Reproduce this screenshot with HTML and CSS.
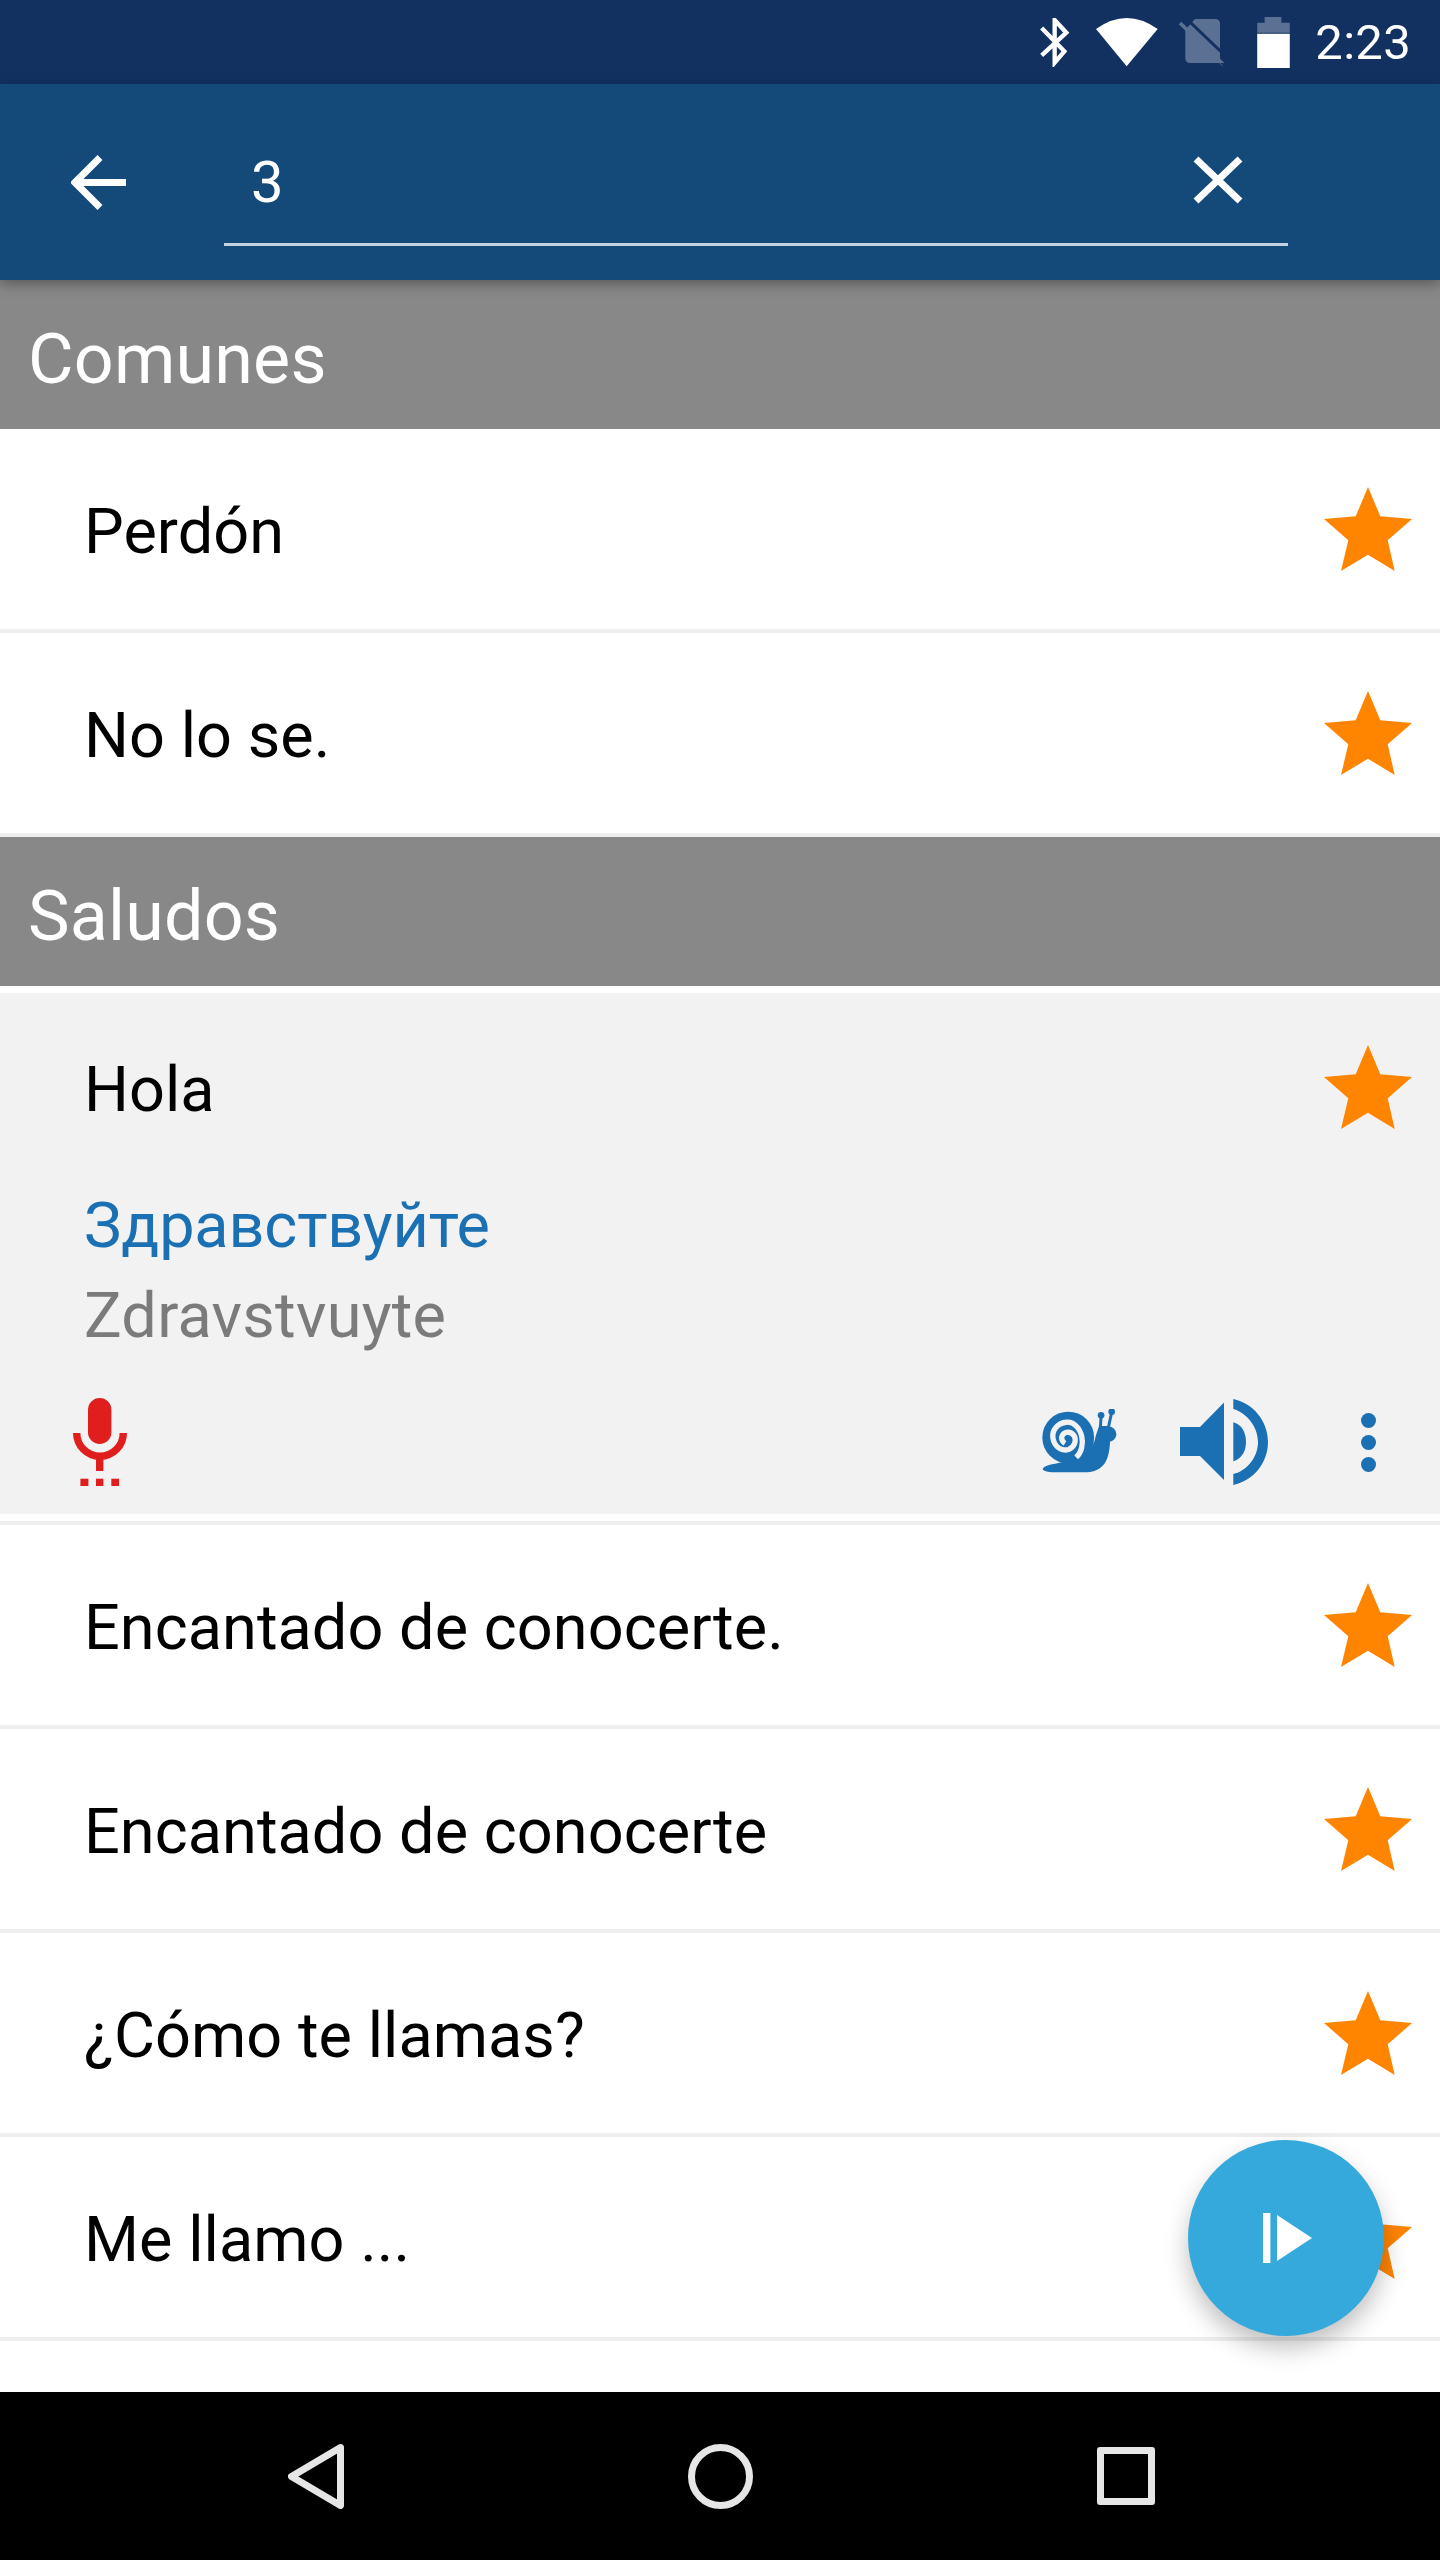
FILE: index.html
```html
<!DOCTYPE html>
<html lang="es">
<head>
    <meta charset="UTF-8">
    <meta name="viewport" content="width=device-width, initial-scale=1.0">
    <title>Frases</title>
    <link rel="stylesheet" href="styles.css">
</head>
<body>
    <svg class="defs" width="0" height="0">
        <symbol id="star" viewBox="0 0 88 84">
            <polygon points="44,0 56.3,29.3 88,32 63.7,53.3 70.7,84 44,67.7 17,84 24.3,53.3 0,32 31.7,29.3"/>
        </symbol>
    </svg>

    <div class="app">
        <div class="status-bar">
            <svg class="ic-bluetooth" viewBox="0 0 93 147"><path d="M8 30L76 100L47 134V6L82 44L8 112" fill="none" stroke="#fff" stroke-width="13"/></svg>
            <svg class="ic-wifi" viewBox="0 0 186 147"><path d="M0 33Q92 -33 185 33L92 145Z" fill="#fff"/></svg>
            <svg class="ic-sim" viewBox="0 0 138 144">
                <path d="M48 3H108Q123 3 123 18V135H34Q19 135 19 120V35Z" fill="#5b7193"/>
                <path d="M14 -6L146 120" stroke="#123160" stroke-width="9"/>
                <path d="M3 15L135 141" stroke="#5b7193" stroke-width="11"/>
                <path d="M123 135L138 149V135Z" fill="#123160"/>
            </svg>
            <svg class="ic-battery" viewBox="0 0 97 152">
                <path d="M22 0H72V17H97V47H0V17H22Z" fill="#5b7193"/>
                <rect x="0" y="50" width="97" height="102" fill="#fff"/>
            </svg>
            <span class="clock">2:23</span>
        </div>

        <div class="toolbar">
            <svg class="ic-back" viewBox="0 0 55 55"><path d="M55 27.5H5M29 2.5L4 27.5L29 52.5" fill="none" stroke="#fff" stroke-width="7"/></svg>
            <div class="search">
                <span class="search-text">3</span>
                <svg class="ic-clear" viewBox="0 0 50 48"><path d="M3 3L47 45M47 3L3 45" fill="none" stroke="#fff" stroke-width="7"/></svg>
            </div>
        </div>

        <div class="content">
            <div class="section-title">Comunes</div>
            <div class="row">
                <span class="phrase">Perdón</span>
                <svg class="star"><use href="#star"/></svg>
            </div>
            <div class="row">
                <span class="phrase">No lo se.</span>
                <svg class="star"><use href="#star"/></svg>
            </div>

            <div class="section-title">Saludos</div>
            <div class="open-item">
                <div class="open-body">
                    <div class="open-head">
                        <span class="phrase">Hola</span>
                        <svg class="star"><use href="#star"/></svg>
                    </div>
                    <div class="translation">Здравствуйте</div>
                    <div class="transliteration">Zdravstvuyte</div>
                    <div class="actions">
                        <svg class="ic-mic" viewBox="0 0 54 88">
                            <rect x="15" y="0" width="23.4" height="46" rx="11.7"/>
                            <path d="M3.7 35a23.3 23.3 0 0 0 46.6 0" fill="none" stroke="#e01e1e" stroke-width="7.4"/>
                            <rect x="23" y="58" width="7.4" height="15"/>
                            <rect x="7.4" y="80.7" width="8" height="7.3"/>
                            <rect x="23" y="80.7" width="7.4" height="7.3"/>
                            <rect x="38.3" y="80.7" width="7.8" height="7.3"/>
                        </svg>
                        <svg class="ic-snail" viewBox="20 25 235 197">
                            <circle cx="102" cy="110" r="78"/>
                            <path d="M28 200C40 192 60 190 75 186L140 170C165 155 180 135 185 105L195 75H225L228 122C226 170 215 215 150 215H60C40 215 25 210 25 205Z"/>
                            <circle cx="224" cy="100" r="23"/>
                            <path d="M199 80L201 45M223 80L233 34" fill="none" stroke="#1b70b3" stroke-width="9"/>
                            <circle cx="201" cy="43" r="10"/>
                            <circle cx="233" cy="32" r="10"/>
                            <path d="M126 170C142 155 148 130 143 108C137 80 118 62 97 64C70 66 52 88 56 112C60 138 82 152 103 146C120 140 128 120 120 105C112 92 95 90 85 102C80 110 82 122 92 128" fill="none" stroke="#f2f2f2" stroke-width="16"/>
                        </svg>
                        <svg class="ic-speaker" viewBox="0 0 88 86">
                            <path d="M0 28H20L44 3.5V81L20 57H0Z"/>
                            <path d="M53.3 23.3C61 25 66 33 66 43C66 53 61 60 53.3 62.3Z"/>
                            <path d="M53.3 0C73 4 88 22 88 43C88 64 73 82 53.3 86V75C67 72 78 58 78 43C78 28 67 14 53.3 10Z"/>
                        </svg>
                        <svg class="ic-more" viewBox="0 0 15 59">
                            <circle cx="7.5" cy="7.5" r="7.5"/>
                            <circle cx="7.5" cy="29.5" r="7.5"/>
                            <circle cx="7.5" cy="51.5" r="7.5"/>
                        </svg>
                    </div>
                </div>
            </div>
            <div class="row">
                <span class="phrase">Encantado de conocerte.</span>
                <svg class="star"><use href="#star"/></svg>
            </div>
            <div class="row">
                <span class="phrase">Encantado de conocerte</span>
                <svg class="star"><use href="#star"/></svg>
            </div>
            <div class="row">
                <span class="phrase">¿Cómo te llamas?</span>
                <svg class="star"><use href="#star"/></svg>
            </div>
            <div class="row">
                <span class="phrase">Me llamo ...</span>
                <svg class="star"><use href="#star"/></svg>
            </div>

            <div class="fab">
                <svg class="ic-play" viewBox="0 0 49 50">
                    <rect x="0" y="0" width="7.4" height="50"/>
                    <polygon points="14,2 49,25 14,48"/>
                </svg>
            </div>
        </div>

        <div class="nav-bar">
            <svg class="ic-nav-back" viewBox="0 0 56 65"><path d="M52.5 3.5L3.5 32.5L52.5 61.5Z" fill="none" stroke="#e6e6e6" stroke-width="7" stroke-linejoin="round"/></svg>
            <svg class="ic-nav-home" viewBox="0 0 65 65"><circle cx="32.5" cy="32.5" r="29" fill="none" stroke="#e6e6e6" stroke-width="7"/></svg>
            <div class="nav-recent"></div>
        </div>
    </div>
</body>
</html>
```

FILE: styles.css
```css
body {
    margin: 0;
    background: #fff;
    font-family: Roboto, "Liberation Sans", sans-serif;
}
.defs {
    position: absolute;
}
.app {
    width: 1440px;
    height: 2560px;
    display: flex;
    flex-direction: column;
    overflow: hidden;
}

/* status bar */
.status-bar {
    height: 84px;
    flex: none;
    background: #123160;
    display: flex;
    align-items: center;
    justify-content: flex-end;
    padding-right: 29px;
    box-sizing: border-box;
}
.ic-bluetooth { width: 31px; height: 49px; }
.ic-wifi { width: 62px; height: 49px; margin-left: 26px; }
.ic-sim { width: 46px; height: 48px; margin-left: 21px; }
.ic-battery { width: 33px; height: 51px; margin-left: 32px; }
.clock {
    margin-left: 25px;
    color: #fff;
    font-size: 49px;
    letter-spacing: 0.3px;
}

/* search toolbar */
.toolbar {
    height: 196px;
    flex: none;
    background: #144a79;
    display: flex;
    align-items: center;
    padding-left: 71px;
    box-sizing: border-box;
    position: relative;
    z-index: 2;
    box-shadow: 0 4px 12px rgba(0,0,0,0.35);
}
.ic-back { width: 55px; height: 55px; }
.search {
    width: 1064px;
    height: 125px;
    margin: 3px 0 0 98px;
    padding: 0 45px 0 27px;
    box-sizing: border-box;
    border-bottom: 3px solid #c3d2de;
    display: flex;
    align-items: center;
    justify-content: space-between;
}
.search-text {
    color: #fff;
    font-size: 58px;
}
.ic-clear { width: 50px; height: 48px; margin-bottom: 4px; }

/* list */
.content {
    flex: 1;
    position: relative;
    overflow: hidden;
}
.section-title {
    height: 149px;
    line-height: 149px;
    padding: 5px 0 0 28px;
    box-sizing: border-box;
    background: #888;
    color: #fff;
    font-size: 70px;
    letter-spacing: 0.2px;
}
.row {
    height: 204px;
    box-sizing: border-box;
    border-bottom: 4px solid #eee;
    padding: 0 28px 0 84px;
    display: flex;
    align-items: center;
    justify-content: space-between;
}
.phrase {
    font-size: 63px;
    color: #000;
    padding-top: 5px;
    letter-spacing: 0.05px;
}
.star {
    width: 88px;
    height: 84px;
    fill: #ff8400;
}

/* expanded phrase */
.open-item {
    padding: 7px 0;
    border-bottom: 4px solid #eee;
}
.open-body {
    height: 521px;
    background: #f2f2f2;
}
.open-head {
    height: 188px;
    padding: 0 28px 0 84px;
    box-sizing: border-box;
    display: flex;
    align-items: center;
    justify-content: space-between;
}
.translation, .transliteration {
    padding-left: 84px;
    font-size: 63px;
    line-height: 90px;
}
.translation { color: #1b70b3; letter-spacing: -0.15px; }
.transliteration { color: #7b7b7b; letter-spacing: 0.25px; }
.actions {
    height: 153px;
    padding: 9px 64px 0 73px;
    box-sizing: border-box;
    display: flex;
    align-items: center;
    fill: #1b70b3;
}
.ic-mic { width: 54px; height: 88px; fill: #e01e1e; }
.ic-snail { width: 78px; height: 66px; margin-left: auto; }
.ic-speaker { width: 88px; height: 86px; margin-left: 61px; }
.ic-more { width: 15px; height: 59px; margin-left: 93px; }

/* floating play button */
.fab {
    position: absolute;
    right: 56px;
    bottom: 56px;
    width: 196px;
    height: 196px;
    border-radius: 50%;
    background: #36a9dc;
    box-shadow: 0 12px 24px rgba(0,0,0,0.25);
    display: flex;
    align-items: center;
    justify-content: center;
    fill: #fff;
}
.ic-play { width: 49px; height: 50px; margin-left: 2px; }

/* android nav */
.nav-bar {
    height: 168px;
    flex: none;
    background: #000;
    display: flex;
    align-items: center;
    justify-content: space-between;
    padding: 0 285px 0 288px;
    box-sizing: border-box;
}
.ic-nav-back { width: 56px; height: 65px; }
.ic-nav-home { width: 65px; height: 65px; }
.nav-recent {
    width: 58px;
    height: 58px;
    box-sizing: border-box;
    border: 7px solid #e6e6e6;
    border-radius: 3px;
}
```
